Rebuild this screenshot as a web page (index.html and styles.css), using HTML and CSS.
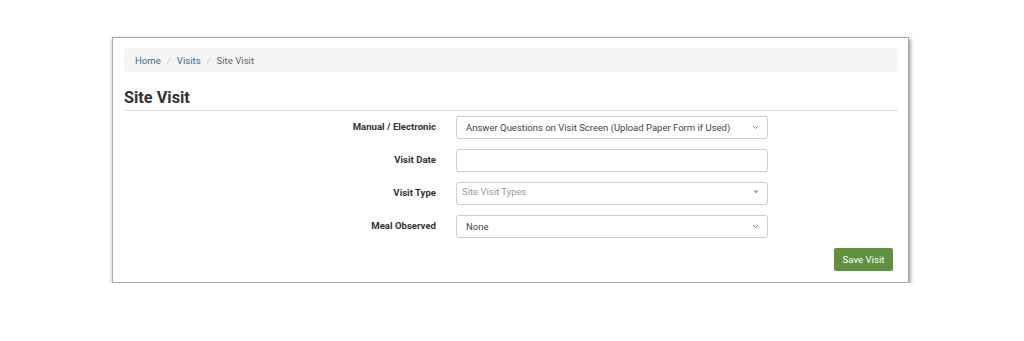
FILE: index.html
```html
<!DOCTYPE html>
<html lang="en">

<head>
  <meta charset="UTF-8">
  <title>Site Visit</title>
  <link rel="stylesheet" href="styles.css">
</head>

<body>
  <div class="panel">
    <ol class="breadcrumb">
      <li><a href="#">Home</a></li>
      <li><a href="#">Visits</a></li>
      <li class="active">Site Visit</li>
    </ol>

    <h2 class="page-title">Site Visit</h2>

    <form class="visit-form">
      <div class="form-row">
        <label>Manual / Electronic</label>
        <div class="field select">
          <span>Answer Questions on Visit Screen (Upload Paper Form if Used)</span>
          <svg class="caret" width="7" height="5" viewBox="0 0 7 5"><path d="M1 1l2.5 2.5L6 1" fill="none" stroke="#888" stroke-width="1"/></svg>
        </div>
      </div>
      <div class="form-row">
        <label>Visit Date</label>
        <div class="field"></div>
      </div>
      <div class="form-row">
        <label>Visit Type</label>
        <div class="field select placeholder">
          <span>Site Visit Types</span>
          <svg class="caret" width="6" height="4" viewBox="0 0 6 4"><path d="M0.5 0.5h5L3 3.5z" fill="#999"/></svg>
        </div>
      </div>
      <div class="form-row">
        <label>Meal Observed</label>
        <div class="field select">
          <span>None</span>
          <svg class="caret" width="7" height="5" viewBox="0 0 7 5"><path d="M1 1l2.5 2.5L6 1" fill="none" stroke="#888" stroke-width="1"/></svg>
        </div>
      </div>
      <div class="actions">
        <button type="button">Save Visit</button>
      </div>
    </form>
  </div>
</body>

</html>
```

FILE: styles.css
```css
body {
  margin: 0;
  padding: 37px 0 0 112px;
  background-color: #fff;
  font-family: Roboto, "Liberation Sans", sans-serif;
  color: #333;
}

.panel {
  width: 774px;
  padding: 10px 10px 11px 11px;
  border: 1px solid #aaa;
  box-shadow: 1px 2px 4px rgba(0, 0, 0, 0.5);
  background-color: #fff;
}

.breadcrumb {
  list-style: none;
  margin: 0;
  padding: 0 11px;
  height: 24px;
  display: flex;
  align-items: center;
  background-color: #f5f5f5;
  border-radius: 2px;
  font-size: 9.6px;
}

.breadcrumb li + li::before {
  content: "/";
  color: #ccc;
  padding: 0 6px;
}

.breadcrumb a {
  color: #3a6891;
  text-decoration: none;
}

.breadcrumb .active {
  color: #666;
}

.page-title {
  margin: 16px 0 0;
  padding-bottom: 2px;
  font-size: 16.3px;
  font-weight: 700;
  color: #333;
  border-bottom: 1px solid #ddd;
  line-height: 20px;
}

.visit-form {
  margin-top: 5px;
}

.form-row {
  display: flex;
  align-items: center;
  height: 23px;
  margin-bottom: 10px;
}

.form-row label {
  width: 312px;
  text-align: right;
  font-size: 9.6px;
  font-weight: 700;
  color: #333;
  padding-right: 20px;
  margin-top: -2px;
}

.field {
  box-sizing: border-box;
  width: 312px;
  height: 23px;
  border: 1px solid #ccc;
  border-radius: 3px;
  display: flex;
  align-items: center;
  justify-content: space-between;
  padding: 0 8px 0 9px;
  font-size: 9.5px;
  color: #444;
  white-space: nowrap;
}

.field.placeholder {
  color: #999;
  padding-left: 5px;
  align-items: flex-start;
  padding-top: 3px;
}

.field.placeholder .caret {
  margin-top: 4px;
}

.actions {
  display: flex;
  justify-content: flex-end;
  padding-right: 5px;
}

button {
  width: 59px;
  height: 23px;
  background-color: #5e9040;
  color: #fff;
  border: none;
  border-radius: 2px;
  font-family: Roboto, "Liberation Sans", sans-serif;
  font-size: 9.6px;
  padding: 0;
}
```
